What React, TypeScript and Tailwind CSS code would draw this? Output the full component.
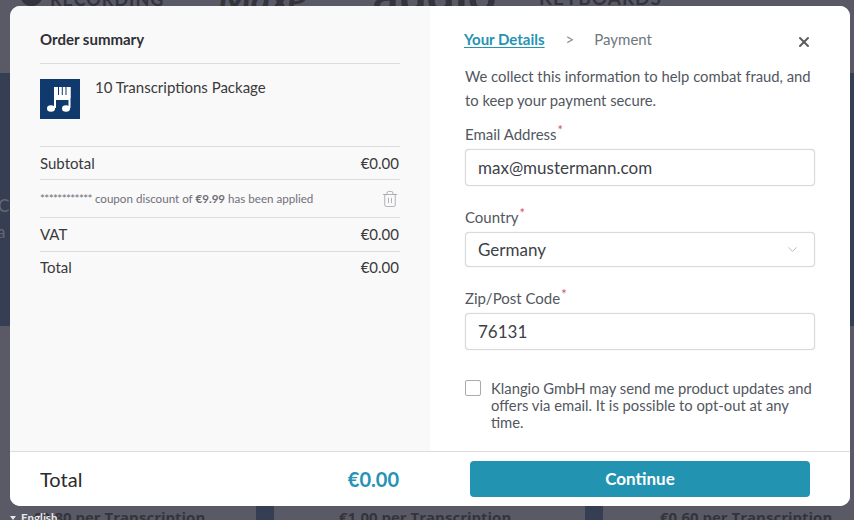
import React from 'react';
import { ChevronDown, Trash2, X } from 'lucide-react';

const Field: React.FC<{ label: string; value: string; select?: boolean; h: string; mb: string }> = ({ label, value, select, h, mb }) => (
  <div className={mb}>
    <div className="text-[15px] leading-[22px] text-[#525760] mb-[4px]">
      {label}
      <span className="relative -top-[5px] ml-[1px] text-[13px] leading-none text-[#d9506e]">*</span>
    </div>
    <div className={`flex items-center justify-between ${h} pl-[12px] pr-[14px] bg-white border border-[#d9d9d9] rounded-[4px] shadow-[0_0_1px_#ccc]`}>
      <span className="text-[17px] text-[#3d4148]">{value}</span>
      {select && <ChevronDown className="w-[15px] h-[15px] text-[#a9a9a9]" strokeWidth={1.25} />}
    </div>
  </div>
);

const Row: React.FC<{ label: string; value: string; h: string }> = ({ label, value, h }) => (
  <div className={`flex items-center justify-between ${h} border-t border-[#dcdcdc] text-[15px] text-[#3a3a3a]`}>
    <span>{label}</span>
    <span className="pr-px">{value}</span>
  </div>
);

export default function App() {
  return (
    <div className="relative w-[854px] h-[520px] overflow-hidden bg-[#5a5a66] font-['Lato',sans-serif]">
      {/* page behind the modal */}
      <div className="absolute left-0 right-0 top-[73px] h-[253px] bg-[#353e53]" />
      <div className="absolute left-[20px] -top-[17px] w-[23px] h-[23px] rounded-full bg-[#33343c]" />
      <div className="absolute left-[50px] -top-[11px] text-[18px] leading-[20px] tracking-[1px] font-bold text-[#33343c]">RECORDING</div>
      <div className="absolute left-[218px] -top-[22px] text-[38px] leading-[40px] italic font-bold text-[#33343c]">Maxe</div>
      <div className="absolute left-[373px] -top-[32px] text-[50px] leading-[50px] font-bold text-[#33343c]">audio</div>
      <div className="absolute left-[539px] -top-[12px] text-[19px] leading-[20px] tracking-[1px] font-bold text-[#33343c]">KEYBOARDS</div>
      <div className="absolute left-[-2px] top-[196px] text-[17px] leading-[20px] text-[#646874]">C</div>
      <div className="absolute left-[-3px] top-[222px] text-[17px] leading-[20px] text-[#646874]">a</div>
      <div className="absolute left-[256px] bottom-0 h-[14px] w-[18px] bg-[#353e53]" />
      <div className="absolute left-[585px] bottom-0 h-[14px] w-[18px] bg-[#353e53]" />
      <div className="absolute left-[33px] top-[507px] text-[15px] leading-[20px] font-bold font-['Open_Sans',sans-serif] text-[#33343c]">€0.80 per Transcription</div>
      <div className="absolute left-[339px] top-[507px] text-[15px] leading-[20px] font-bold font-['Open_Sans',sans-serif] text-[#33343c]">€1.00 per Transcription</div>
      <div className="absolute left-[660px] top-[507px] text-[15px] leading-[20px] font-bold font-['Open_Sans',sans-serif] text-[#33343c]">€0.60 per Transcription</div>
      <div className="absolute left-[10px] top-[511px] flex items-center gap-[5px] text-[11.500px] leading-[14px] font-bold text-[#e8e8ea]">
        <span className="w-0 h-0 border-x-[3px] border-x-transparent border-t-[4px] border-t-[#e8e8ea]" />
        English
      </div>

      <div className="absolute left-[10px] top-[6px] w-[840px] h-[500px] rounded-[10px] bg-white overflow-hidden flex flex-col">
        <div className="flex flex-1 min-h-0">
          <div className="w-[420px] bg-[#f9f9f9] px-[30px]">
            <div className="h-[58px] pt-[22px] border-b border-[#dcdcdc] text-[15px] font-bold leading-[22px] text-[#2f3034]">Order summary</div>
            <div className="flex h-[82px] pt-[15px]">
              <div className="w-10 h-10 bg-[#103a6e] shrink-0">
                <svg width="40" height="40" viewBox="0 0 40 40" fill="white">
                  <ellipse cx="11" cy="29.500" rx="4" ry="3.200" />
                  <ellipse cx="26" cy="29.500" rx="4" ry="3.200" />
                  <rect x="14" y="8" width="2" height="21" />
                  <rect x="28.500" y="8" width="2" height="21" />
                  <path d="M14 8h16.500v11l-2 2h-12.500l-2-2z" />
                  <path d="M18 8h1v8h-1zM21.800 8h1v8h-1zM25.500 8h1v8h-1z" fill="#103a6e" />
                </svg>
              </div>
              <div className="ml-[15px] text-[15px] leading-[20px] -mt-[2px] text-[#3a3a3a]">10 Transcriptions Package</div>
            </div>
            <Row label="Subtotal" value="€0.00" h="h-[33px]" />
            <div className="flex items-center justify-between h-[38px] border-t border-[#dcdcdc] text-[11.600px] text-[#70707a]">
              <span>
                <span className="tracking-[-0.6px]">************</span> coupon discount of <span className="font-bold">€9.99</span> has been applied
              </span>
              <Trash2 className="w-[18px] h-[18px] mr-[1px] text-[#9a9ba6]" strokeWidth={1} />
            </div>
            <Row label="VAT" value="€0.00" h="h-[34px]" />
            <Row label="Total" value="€0.00" h="h-[32px]" />
          </div>

          <div className="relative flex-1 pl-[35px] pr-[35px] bg-white">
            <div className="flex items-center pt-[22px] text-[15px] leading-[22px]">
              <span className="-ml-px font-bold text-[#2593b3] underline underline-offset-2">Your Details</span>
              <span className="ml-[21px] text-[#8a8a8a]">&gt;</span>
              <span className="ml-[20px] text-[#70777d]">Payment</span>
            </div>
            <X className="absolute right-[38px] top-[28px] w-4 h-4 text-[#5c5c5c]" strokeWidth={3} />
            <p className="mt-[14px] mb-[11px] text-[14.800px] leading-[24px] text-[#525760]">
              We collect this information to help combat fraud, and to keep your payment secure.
            </p>
            <Field label="Email Address" value="max@mustermann.com" h="h-[37px]" mb="mb-[20px]" />
            <Field label="Country" value="Germany" h="h-[35px]" mb="mb-[20px]" select />
            <Field label="Zip/Post Code" value="76131" h="h-[37px]" mb="mb-[29px]" />
            <div className="flex gap-[10px]">
              <div className="mt-[1px] w-4 h-4 shrink-0 bg-white border border-[#aaa] rounded-[2px]" />
              <div className="mt-[1px] text-[14.800px] leading-[17px] text-[#525760]">
                Klangio GmbH may send me product updates and offers via email. It is possible to opt-out at any time.
              </div>
            </div>
          </div>
        </div>

        <div className="flex items-center h-[55px] bg-white border-t border-[#dcdcdc] pl-[30px]">
          <span className="w-[359px] text-[20px] text-[#2b2b2b] flex justify-between items-center">
            Total
            <span className="text-[#2593b3] font-bold">€0.00</span>
          </span>
          <button className="ml-[71px] w-[340px] h-9 bg-[#2393b2] rounded-[4px] text-white font-bold text-[17px]">Continue</button>
        </div>
      </div>
    </div>
  );
}
